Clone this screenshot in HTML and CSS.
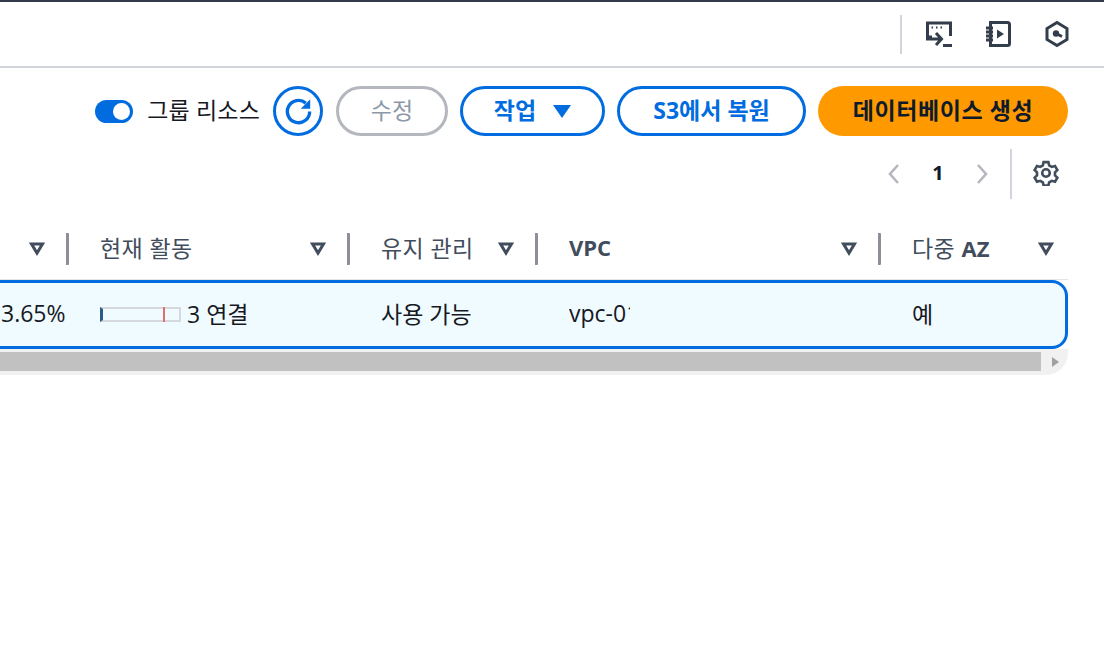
FILE: index.html
```html
<!DOCTYPE html>
<html lang="ko">
<head>
<meta charset="utf-8">
<title>RDS</title>
<link rel="stylesheet" href="styles.css">
</head>
<body>
<header class="topbar">
  <span class="top-divider"></span>
  <svg class="top-icon" viewBox="0 0 28 28"><path d="M7 17H2.500V3h23v13"/><path d="M2.500 16.500V19H15M11 13l5.500 6-5.500 6M18 25.500h9"/><path class="dots" d="M6.500 7.500h1.500M11 7.500h1.500M15.500 7.500h1.500"/></svg>
  <svg class="top-icon" viewBox="0 0 28 28"><path d="M6.500 2.500h17a2 2 0 0 1 2 2v19a2 2 0 0 1-2 2h-17zM2 8h7M2 12h7M2 16h7M2 20h7"/><path class="solid" d="M13 9.500l7 4.500-7 4.500z"/></svg>
  <svg class="top-icon" viewBox="0 0 28 28"><path d="M14 2.500l10 6v11l-10 6-10-6v-11z"/><path d="M13 13.500l6 3"/><circle class="solid" cx="13" cy="13.500" r="3.200"/></svg>
</header>

<section class="toolbar">
  <span class="toggle"><span class="knob"></span></span>
  <span class="toggle-label">그룹 리소스</span>
  <button class="btn btn-icon" type="button" aria-label="새로 고침">
    <svg viewBox="0 0 26 26"><path d="M19.500 5.500A10 10 0 1 0 23 13"/><path class="solid" d="M23.500 2v8.500H15z"/></svg>
  </button>
  <button class="btn btn-disabled btn-edit" type="button">수정</button>
  <button class="btn btn-normal btn-action" type="button">작업<span class="caret"></span></button>
  <button class="btn btn-normal btn-restore" type="button">S3에서 복원</button>
  <button class="btn btn-primary" type="button">데이터베이스 생성</button>
</section>

<nav class="pager">
  <svg class="chev" viewBox="0 0 16 24"><path d="M12 3L4 12l8 9"/></svg>
  <span class="page-num">1</span>
  <svg class="chev" viewBox="0 0 16 24"><path d="M4 3l8 9-8 9"/></svg>
  <span class="pager-divider"></span>
  <svg class="gear" viewBox="0 0 24 24"><path d="M9.800 2h4.400l.7 3 2.400 1.400 3-.9 2.200 3.800-2.200 2.100v2.800l2.200 2.100-2.200 3.800-3-.9-2.400 1.400-.7 3H9.800l-.7-3-2.400-1.400-3 .9-2.200-3.800 2.200-2.100v-2.800L1.500 9.300l2.200-3.800 3 .9 2.400-1.400z"/><circle cx="12" cy="12" r="3.500"/></svg>
</nav>

<section class="table">
  <div class="thead">
    <div class="th th-first"><svg class="sort" viewBox="0 0 16 14"><path d="M2.500 2h11L8 11z"/></svg></div>
    <div class="th"><span>현재 활동</span><svg class="sort" viewBox="0 0 16 14"><path d="M2.500 2h11L8 11z"/></svg></div>
    <div class="th"><span>유지 관리</span><svg class="sort" viewBox="0 0 16 14"><path d="M2.500 2h11L8 11z"/></svg></div>
    <div class="th"><span class="strong">VPC</span><svg class="sort" viewBox="0 0 16 14"><path d="M2.500 2h11L8 11z"/></svg></div>
    <div class="th th-last"><span>다중 <span class="strong">AZ</span></span><svg class="sort" viewBox="0 0 16 14"><path d="M2.500 2h11L8 11z"/></svg></div>
  </div>
  <div class="row">
    <div class="td td-first">3.65%</div>
    <div class="td td-activity"><span class="meter"><span class="meter-red"></span></span><span>3 연결</span></div>
    <div class="td">사용 가능</div>
    <div class="td"><span class="clipped">vpc-01</span></div>
    <div class="td">예</div>
  </div>
  <div class="scrollbar"><span class="thumb"></span><span class="scroll-arrow"></span></div>
</section>
</body>
</html>
```

FILE: styles.css
```css
* { box-sizing: border-box; }
html, body { margin: 0; height: 100%; }
body {
  width: 1104px;
  height: 671px;
  overflow: hidden;
  background: #fff;
  color: #0f1b2a;
  font-family: "Open Sans", "Noto Sans CJK KR", sans-serif;
  font-size: 23px;
}
svg { display: block; fill: none; stroke: currentColor; }
.solid { fill: currentColor; stroke: none; }
.strong { font-weight: 700; font-size: 22px; letter-spacing: 0; }

.topbar {
  height: 68px;
  border-top: 2px solid #333b4a;
  border-bottom: 2px solid #d1d5db;
  display: flex;
  align-items: center;
  justify-content: flex-end;
  padding: 0 33px 0 0;
  color: #333d4b;
}
.top-divider { width: 2px; height: 39px; background: #d1d5db; margin: 0 23px 0 0; }
.top-icon { width: 28px; height: 28px; stroke-width: 3; margin-left: 31px; }
.top-divider + .top-icon { margin-left: 0; }
.dots { stroke-width: 2; }

.toolbar {
  height: 50px;
  margin-top: 18px;
  padding-right: 36px;
  display: flex;
  align-items: center;
  justify-content: flex-end;
}
.toggle {
  width: 38px;
  height: 23px;
  border-radius: 12px;
  background: #006ce0;
  display: flex;
  align-items: center;
  justify-content: flex-end;
  padding-right: 3px;
}
.knob { width: 17px; height: 17px; border-radius: 50%; background: #fff; }
.toggle-label { margin: 0 13px 4px 14px; color: #16191f; white-space: nowrap; letter-spacing: 0.15px; }

.btn {
  height: 50px;
  border-radius: 25px;
  background: #fff;
  font: inherit;
  font-weight: 700;
  display: flex;
  align-items: center;
  justify-content: center;
  padding: 0 0 4px;
  white-space: nowrap;
}
.btn-icon {
  width: 50px;
  border: 3px solid #006ce0;
  color: #006ce0;
  margin-right: 13px;
  padding: 0;
}
.btn-icon svg { width: 29px; height: 29px; stroke-width: 3; }
.btn-disabled {
  border: 3px solid #b4b7bd;
  color: #8d99a8;
  font-weight: 400;
}
.btn-edit { width: 112px; margin-right: 12px; }
.btn-normal { border: 3px solid #006ce0; color: #006ce0; }
.btn-action { width: 145px; margin-right: 12px; }
.btn-restore { width: 189px; margin-right: 12px; }
.caret {
  width: 0;
  height: 0;
  margin: 4px 0 0 17px;
  border-left: 9px solid transparent;
  border-right: 9px solid transparent;
  border-top: 13px solid #006ce0;
}
.btn-primary {
  width: 250px;
  border: 0;
  background: #ff9900;
  color: #0f1b2a;
  letter-spacing: 0.6px;
}

.pager {
  height: 50px;
  margin-top: 13px;
  padding-right: 45px;
  display: flex;
  align-items: center;
  justify-content: flex-end;
  color: #0f1b2a;
}
.chev { width: 16px; height: 24px; stroke: #b4b7bd; stroke-width: 2.600; }
.page-num { width: 72px; text-align: center; font-weight: 700; font-size: 20px; padding-bottom: 3px; }
.pager-divider { width: 2px; height: 50px; background: #d1d5db; margin: 0 21px 0 20px; }
.gear { width: 26px; height: 26px; color: #414d5c; stroke-width: 2.400; margin-bottom: 2px; }

.table { margin-top: 34px; width: 1068px; }
.thead {
  display: grid;
  grid-template-columns: 69px 281px 188px 343px 187px;
  height: 47px;
  border-bottom: 1px solid #e3e5e8;
}
.th {
  height: 32px;
  border-right: 3px solid #8c8f97;
  border-radius: 1px;
  padding: 0 21px 0 31px;
  display: flex;
  align-items: center;
  justify-content: space-between;
  color: #414d5c;
  letter-spacing: 0.4px;
}
.th > span { margin-bottom: 4px; }
.th-first { justify-content: flex-end; padding: 0 21px 0 0; }
.th-last { border-right: 0; padding-right: 14px; }
.sort { width: 16px; height: 14px; stroke: #414d5c; stroke-width: 3; }

.row {
  display: grid;
  height: 69px;
  margin-left: -20px;
  width: 1088px;
  grid-template-columns: 87px 281px 188px 343px 189px;
  border: 3px solid #006ce0;
  border-radius: 0 16px 16px 0;
  background: #f0fbff;
  align-items: center;
  color: #16191f;
}
.td { padding: 0 0 3px 30px; white-space: nowrap; }
.td-first { padding-left: 18px; }
.td-activity { display: flex; align-items: center; gap: 6px; }
.clipped { display: block; width: 61px; overflow: hidden; }
.meter {
  position: relative;
  display: block;
  width: 81px;
  height: 15px;
  margin-top: 3px;
  border: 2px solid #d5d8dc;
  border-left: 3px solid #2b5a85;
  background: #f0fbff;
}
.meter-red {
  position: absolute;
  left: 60px;
  top: -2px;
  width: 2px;
  height: 15px;
  background: #e07070;
}

.scrollbar {
  height: 26px;
  padding: 3px 0 4px;
  background: #f1f1f1;
  border-radius: 0 0 22px 0;
  display: flex;
  align-items: stretch;
  position: relative;
}
.thumb { width: 1041px; background: #c1c1c1; }
.scroll-arrow {
  position: absolute;
  left: 1052px;
  top: 8px;
  width: 0;
  height: 0;
  border-top: 5px solid transparent;
  border-bottom: 5px solid transparent;
  border-left: 7px solid #a0a0a0;
}
```
